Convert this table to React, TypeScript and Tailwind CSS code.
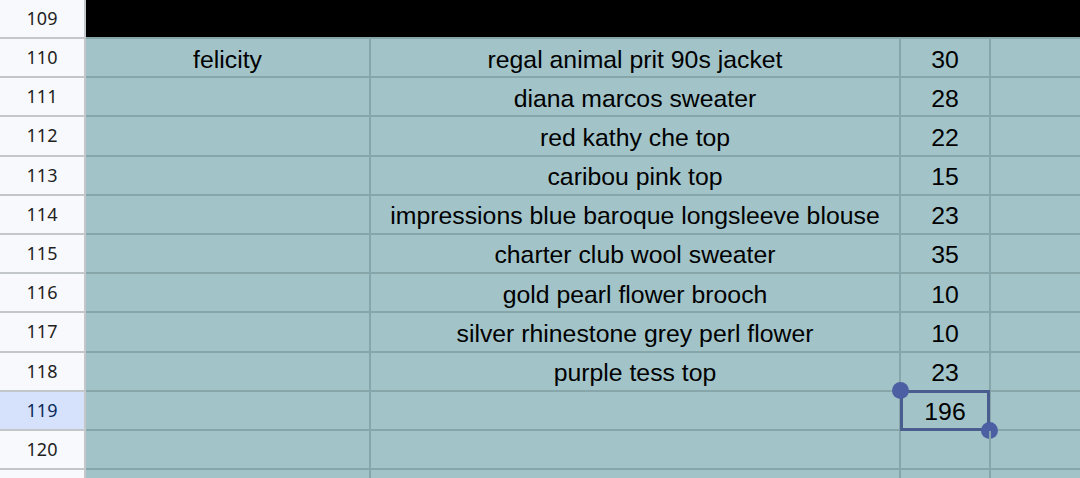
import React from "react";

const rows: { n: number; a?: string; b?: string; c?: string; hide?: boolean }[] = [
  { n: 110, a: "felicity", b: "regal animal prit 90s jacket", c: "30" },
  { n: 111, b: "diana marcos sweater", c: "28" },
  { n: 112, b: "red kathy che top", c: "22" },
  { n: 113, b: "caribou pink top", c: "15" },
  { n: 114, b: "impressions blue baroque longsleeve blouse", c: "23" },
  { n: 115, b: "charter club wool sweater", c: "35" },
  { n: 116, b: "gold pearl flower brooch", c: "10" },
  { n: 117, b: "silver rhinestone grey perl flower", c: "10" },
  { n: 118, b: "purple tess top", c: "23" },
  { n: 119, c: "196" },
  { n: 120 },
  { n: 121, hide: true },
];

const cellFont = { fontFamily: '"Liberation Sans", Arial, sans-serif' };

export default function App() {
  return (
    <div className="w-[1080px] h-[478px] overflow-hidden bg-[#a2c4c9] relative">
      {/* row 109 */}
      <div className="flex h-[40px] mt-[-1px]">
        <div
          className="w-[86px] shrink-0 bg-[#f8f9fc] border-r-2 border-b-2 border-[#c4c7c9] flex items-center justify-center text-[18px] text-[#1f1f1f]"
          style={{ fontFamily: '"Noto Sans", sans-serif' }}
        >
          109
        </div>
        <div className="flex-1 bg-black border-b-2 border-[#86a6aa]" />
      </div>
      {rows.map((r) => {
        const sel = r.n === 119;
        return (
          <div key={r.n} className="flex h-[39.2px]">
            <div
              className={`w-[86px] shrink-0 border-r-2 border-b-2 border-[#c4c7c9] flex items-center justify-center text-[18px] ${
                sel ? "bg-[#d6e2fb] text-[#0b2a5a]" : "bg-[#f8f9fc] text-[#1f1f1f]"
              }`}
              style={{ fontFamily: '"Noto Sans", sans-serif' }}
            >
              {r.hide ? "" : r.n}
            </div>
            <div
              className="w-[285px] shrink-0 border-r-2 border-b-2 border-[#86a6aa] flex items-center justify-center pt-[3px] text-[24.8px] text-black"
              style={cellFont}
            >
              {r.a}
            </div>
            <div
              className="w-[530px] shrink-0 border-r-2 border-b-2 border-[#86a6aa] flex items-center justify-center pt-[3px] text-[24.8px] text-black whitespace-nowrap"
              style={cellFont}
            >
              {r.b}
            </div>
            <div
              className="w-[90px] shrink-0 border-r-2 border-b-2 border-[#86a6aa] flex items-center justify-center pt-[3px] text-[24.8px] text-black relative"
              style={cellFont}
            >
              {r.c}
              {sel && (
                <>
                  <div className="absolute left-[-1px] top-[-2px] w-[90px] h-[41px] border-[3px] border-[#4a5d8f]" />
                  <div className="absolute left-[-9px] top-[-10px] w-[17px] h-[17px] rounded-full bg-[#4d5fa3]" />
                  <div className="absolute left-[80px] top-[30px] w-[17px] h-[17px] rounded-full bg-[#4d5fa3]" />
                </>
              )}
            </div>
            <div className="flex-1 border-b-2 border-[#86a6aa]" />
          </div>
        );
      })}
    </div>
  );
}
